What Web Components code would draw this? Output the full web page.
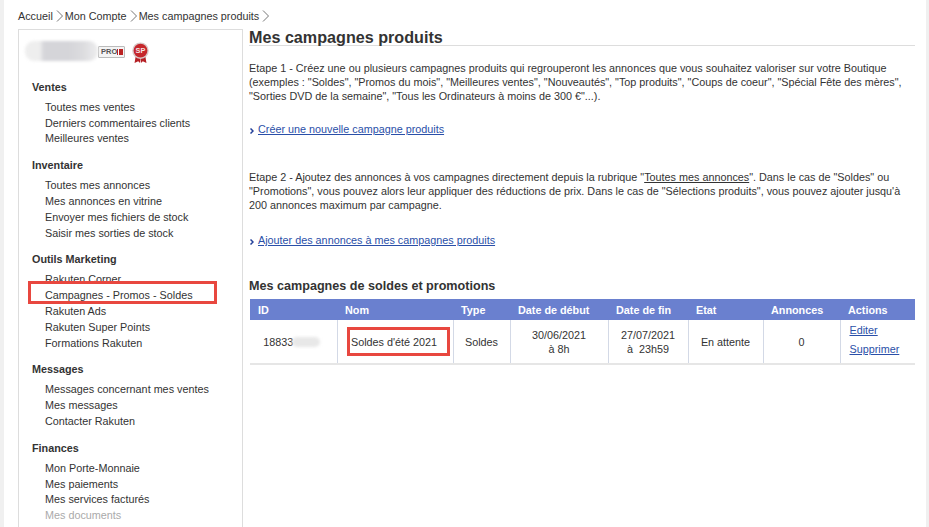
<!DOCTYPE html>
<html lang="fr"><head><meta charset="utf-8"><title>Mes campagnes produits</title>
<style>
html,body{margin:0;padding:0;background:#fff;height:527px;overflow:hidden}
body{font:10.800px/14px "Liberation Sans",Arial,sans-serif;color:#333}
</style></head><body>
<seller-page>
  <crumb-bar slot="crumbs"></crumb-bar>
  <side-nav slot="side">
    <nav-group title="Ventes" items="Toutes mes ventes|Derniers commentaires clients|Meilleures ventes"></nav-group>
    <nav-group title="Inventaire" items="Toutes mes annonces|Mes annonces en vitrine|Envoyer mes fichiers de stock|Saisir mes sorties de stock"></nav-group>
    <nav-group title="Outils Marketing" items="Rakuten Corner|Campagnes - Promos - Soldes|Rakuten Ads|Rakuten Super Points|Formations Rakuten"></nav-group>
    <nav-group title="Messages" items="Messages concernant mes ventes|Mes messages|Contacter Rakuten"></nav-group>
    <nav-group title="Finances" muted="Mes documents" items="Mon Porte-Monnaie|Mes paiements|Mes services facturés|Mes documents"></nav-group>
  </side-nav>
  <main-panel slot="main">
    <campaign-table></campaign-table>
  </main-panel>
  <note-box></note-box>
</seller-page>
<script>
function def(name,html,init){
  customElements.define(name,class extends HTMLElement{
    constructor(){super();this.attachShadow({mode:'open'}).innerHTML=html;}
    connectedCallback(){if(init)init(this,this.shadowRoot);}
  });
}
def('seller-page',`<style>
:host{display:block;position:relative;height:527px;box-sizing:border-box;border-left:4px solid #f0f0f0;border-right:3px solid #f0f0f0;padding:0 10px 0 14px;overflow:hidden}
.body{display:flex;align-items:flex-start;gap:6px}
</style><slot name="crumbs"></slot><div class="body"><slot name="side"></slot><slot name="main"></slot></div><slot></slot>`);

def('note-box',`<style>:host{position:absolute;left:24px;top:281px;width:189px;height:23px;box-sizing:border-box;border:3px solid #e8473f}</style>`);

def('crumb-bar',`<style>
:host{display:flex;align-items:center;height:29px;padding-top:2px;box-sizing:border-box;color:#333}
svg{width:7px;height:12px;margin:0 2px 0 3px;flex:none}
</style>
<span>Accueil</span><svg viewBox="0 0 7 12"><path d="M1 .5 6.500 6 1 11.500" fill="none" stroke="#777"/></svg>
<span>Mon Compte</span><svg viewBox="0 0 7 12"><path d="M1 .5 6.500 6 1 11.500" fill="none" stroke="#777"/></svg>
<span>Mes campagnes produits</span><svg viewBox="0 0 7 12"><path d="M1 .5 6.500 6 1 11.500" fill="none" stroke="#777"/></svg>`);

def('side-nav',`<style>
:host{display:block;width:225px;height:510px;box-sizing:border-box;border:1px solid #ddd;border-bottom:0;flex:none;overflow:hidden}
.top{display:flex;align-items:center;height:30px;margin:9px 0 0 6px}
.blur{width:73px;height:20px;border-radius:9px;margin-top:-6px;background:linear-gradient(90deg,#eee 0,#eee 20%,#d5d5d9 26%,#d5d5d9 60%,#dcdcdf 80%,#eeeeee 100%);filter:blur(1.500px);flex:none}
.pro{font:bold 7.500px/10px "Liberation Sans",Arial,sans-serif;color:#555;background:#f4f4f4;border:1px solid #bbb;border-radius:1px;padding:0 1px 0 2px;height:10px;display:flex;align-items:center;margin:-4px 0 0 0;flex:none}
.pro i{display:block;width:6px;height:6px;margin-left:0;background:linear-gradient(90deg,#b22 0 25%,#fff 25% 37%,#b22 37% 62%,#fff 62% 74%,#b22 74%)}
svg{width:19px;height:22px;margin:-3px 0 0 6px;flex:none}
.list{padding:9.800px 0 0 13px}
</style>
<div class="top"><div class="blur"></div><div class="pro">PRO<i></i></div>
<svg viewBox="0 0 20 24"><path d="M5 14 3.500 23 7.500 21 9.500 23 10 16ZM15 14 16.500 23 12.500 21 10.500 23 10 16Z" fill="#b52025"/><circle cx="10" cy="9.500" r="9" fill="#d8c8c8"/><circle cx="10" cy="9.500" r="7.500" fill="#c5262b"/><text x="10" y="12.500" text-anchor="middle" font-family="Liberation Sans" font-weight="700" font-size="8" fill="#f6e4e4">SP</text></svg></div>
<div class="list"><slot></slot></div>`);

def('nav-group',`<style>
:host{display:block;margin-bottom:10px}
h3{margin:0 0 5px;font:bold 10.800px/16px "Liberation Sans",Arial,sans-serif;color:#333}
ul{margin:0;padding:0 0 0 13px;list-style:none}
li{line-height:15.800px;color:#333;white-space:nowrap}
li.off{color:#aaa}
</style><h3></h3><ul></ul>`,(el,s)=>{
  s.querySelector('h3').textContent=el.getAttribute('title');
  el.removeAttribute('title');
  const muted=el.getAttribute('muted');
  const ul=s.querySelector('ul');
  el.getAttribute('items').split('|').forEach(t=>{
    const li=document.createElement('li');li.textContent=t;
    if(t===muted)li.className='off';
    ul.appendChild(li);
  });
});

def('main-panel',`<style>
:host{display:block;width:666px;flex:none;line-height:14px;color:#333}
h1{margin:0;font:bold 16.150px/17px "Liberation Sans",Arial,sans-serif;color:#333;border-bottom:1px solid #ddd;height:16px}
p{margin:0}
.p1{margin-top:15px}
.p2{margin-top:34px}
.act{display:flex;align-items:center;height:14px;margin-top:19px}
.a2{margin-top:21px}
.act svg{width:4px;height:6px;margin:4px 4px 0 1px;flex:none}
a{color:#2a4fa8;text-decoration:underline}
a.plain{color:#333}
h2{margin:32px 0 5px;font:bold 12.600px/15px "Liberation Sans",Arial,sans-serif;color:#333}
</style>
<h1>Mes campagnes produits</h1>
<p class="p1">Etape 1 - Créez une ou plusieurs campagnes produits qui regrouperont les annonces que vous souhaitez valoriser sur votre Boutique<br>(exemples : "Soldes", "Promos du mois", "Meilleures ventes", "Nouveautés", "Top produits", "Coups de coeur", "Spécial Fête des mères",<br>"Sorties DVD de la semaine", "Tous les Ordinateurs à moins de 300 €"...).</p>
<div class="act"><svg viewBox="0 0 4 6"><path d="M.5.5 3 3 .5 5.500" fill="none" stroke="#23409a" stroke-width="1.500"/></svg><a href="#">Créer une nouvelle campagne produits</a></div>
<p class="p2">Etape 2 - Ajoutez des annonces à vos campagnes directement depuis la rubrique "<a class="plain" href="#">Toutes mes annonces</a>". Dans le cas de "Soldes" ou<br>"Promotions", vous pouvez alors leur appliquer des réductions de prix. Dans le cas de "Sélections produits", vous pouvez ajouter jusqu'à<br>200 annonces maximum par campagne.</p>
<div class="act a2"><svg viewBox="0 0 4 6"><path d="M.5.5 3 3 .5 5.500" fill="none" stroke="#23409a" stroke-width="1.500"/></svg><a href="#">Ajouter des annonces à mes campagnes produits</a></div>
<h2>Mes campagnes de soldes et promotions</h2>
<slot></slot>`);

def('campaign-table',`<style>
:host{display:block;position:relative;margin-left:1px;width:665px;color:#333}
table{border-collapse:collapse;table-layout:fixed;width:665px}
th{height:21px;padding:0 0 0 8px;background:#6a80cf;color:#fff;text-align:left;font:bold 10.800px/14px "Liberation Sans",Arial,sans-serif;white-space:nowrap}
td{height:44px;padding:0;text-align:center;border-right:1px solid #d3d9e6;border-bottom:2px solid #e6e6e6;line-height:14px;box-sizing:border-box}
td.nom{padding-right:2px}
td.acts{border-right:0;text-align:left;padding:0 0 4px 9px;line-height:19px}
a{color:#2a4fa8;text-decoration:underline}
.id{display:flex;justify-content:center;align-items:center;padding-right:3px}
.id i{display:inline-block;width:28px;height:10px;margin-left:-1px;border-radius:5px;background:#e8e8e8;filter:blur(1.500px)}
.mark{position:absolute;left:97px;top:28px;width:103px;height:29px;box-sizing:border-box;border:3px solid #e8473f}
</style>
<table><colgroup><col style="width:87px"><col style="width:116px"><col style="width:57px"><col style="width:98px"><col style="width:80px"><col style="width:75px"><col style="width:77px"><col></colgroup>
<tr><th>ID</th><th>Nom</th><th>Type</th><th>Date de début</th><th>Date de fin</th><th>Etat</th><th>Annonces</th><th>Actions</th></tr>
<tr><td><div class="id">18833<i></i></div></td><td class="nom">Soldes d'été 2021</td><td>Soldes</td><td>30/06/2021<br>à 8h</td><td>27/07/2021<br>à&nbsp; 23h59</td><td>En attente</td><td>0</td><td class="acts"><a href="#">Editer</a><br><a href="#">Supprimer</a></td></tr></table>
<div class="mark"></div>`);
</script>
</body></html>
